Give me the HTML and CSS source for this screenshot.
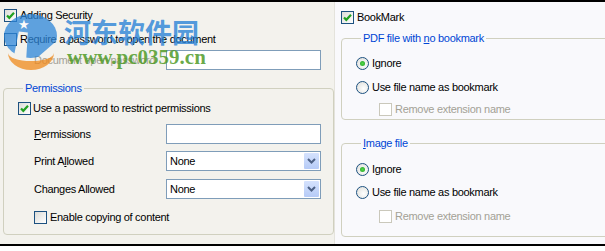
FILE: index.html
```html
<!DOCTYPE html>
<html lang="en">
<head>
  <meta charset="UTF-8" />
  <title>PDF Options</title>
  <link rel="stylesheet" href="styles.css">
</head>
<body>
  <div class="frame">
    <div class="pane left">
      <div class="row">
        <span class="check on"><svg viewBox="0 0 11 11"><path d="M2 5.5 L4.3 7.8 L9 2.8" /></svg></span>
        <span class="text">Adding Security</span>
      </div>
      <div class="row second">
        <span class="check"></span>
        <span class="text">Require a password to open the document</span>
      </div>
      <div class="row field">
        <span class="label muted">Document open password</span>
        <span class="input"></span>
      </div>

      <fieldset class="group perms">
        <legend>Permissions</legend>
        <div class="row inner">
          <span class="check on"><svg viewBox="0 0 11 11"><path d="M2 5.5 L4.3 7.8 L9 2.8" /></svg></span>
          <span class="text">Use a password to restrict permissions</span>
        </div>
        <div class="row field f1">
          <span class="label"><u>P</u>ermissions</span>
          <span class="input"></span>
        </div>
        <div class="row field f2">
          <span class="label">Print A<u>l</u>lowed</span>
          <span class="input combo">None<span class="drop"><svg viewBox="0 0 9 6"><path d="M1 1 L4.5 4.5 L8 1" /></svg></span></span>
        </div>
        <div class="row field f3">
          <span class="label">Chan<u>g</u>es Allowed</span>
          <span class="input combo">None<span class="drop"><svg viewBox="0 0 9 6"><path d="M1 1 L4.5 4.5 L8 1" /></svg></span></span>
        </div>
        <div class="row copy">
          <span class="check"></span>
          <span class="text">Enable copying of content</span>
        </div>
      </fieldset>
    </div>

    <div class="pane right">
      <div class="row bm">
        <span class="check on"><svg viewBox="0 0 11 11"><path d="M2 5.5 L4.3 7.8 L9 2.8" /></svg></span>
        <span class="text">BookMark</span>
      </div>

      <fieldset class="group side first">
        <legend>PDF file with <u>n</u>o bookmark</legend>
        <div class="row opt">
          <span class="radio on"></span>
          <span class="text">Ignore</span>
        </div>
        <div class="row opt">
          <span class="radio"></span>
          <span class="text">Use file name as bookmark</span>
        </div>
        <div class="row opt sub">
          <span class="check off"></span>
          <span class="text muted">Remove extension name</span>
        </div>
      </fieldset>

      <fieldset class="group side second-group">
        <legend><u>I</u>mage file</legend>
        <div class="row opt">
          <span class="radio on"></span>
          <span class="text">Ignore</span>
        </div>
        <div class="row opt">
          <span class="radio"></span>
          <span class="text">Use file name as bookmark</span>
        </div>
        <div class="row opt sub">
          <span class="check off"></span>
          <span class="text muted">Remove extension name</span>
        </div>
      </fieldset>
    </div>

    <div class="watermark">
      <div class="wm-logo">
        <div class="wm-disc"></div>
        <div class="wm-swoosh"></div>
        <div class="wm-star">★</div>
      </div>
      <span class="wm-name">河东软件园</span>
      <span class="wm-url">www.pc0359.cn</span>
    </div>
  </div>
</body>
</html>
```

FILE: styles.css
```css
* {
  margin: 0;
  padding: 0;
  box-sizing: border-box;
}

body {
  background: #ffffff;
  font-family: 'Liberation Sans', Arial, sans-serif;
  font-size: 11px;
  letter-spacing: -0.3px;
  color: #000000;
}

.frame {
  position: relative;
  display: flex;
  width: 605px;
  height: 246px;
  border-top: 2px solid #000;
  border-bottom: 2px solid #000;
  overflow: hidden;
}

.pane {
  display: flex;
  flex-direction: column;
}

.left {
  width: 336px;
  background: #f3f2ed;
  padding: 3px 0 0 4px;
}

.right {
  flex: 1;
  background: #f9f9fc;
  border-left: 1px solid #e4e3dc;
  padding: 5px 0 0 5px;
}

.row {
  display: flex;
  align-items: center;
  height: 20px;
  gap: 1px;
}

.row .text {
  white-space: nowrap;
}

.second {
  margin-top: 4px;
}

.field {
  margin-top: 1px;
  gap: 0;
}

.label {
  width: 132px;
  padding-left: 30px;
  white-space: nowrap;
  flex: none;
}

.left > .field .label {
  width: 162px;
}

.muted {
  color: #a3a196;
}

.input {
  display: flex;
  align-items: center;
  width: 155px;
  height: 20px;
  border: 1px solid #7f9db9;
  background: #fff;
  padding-left: 3px;
  position: relative;
}

.drop {
  position: absolute;
  right: 1px;
  top: 1px;
  width: 15px;
  height: 16px;
  background: linear-gradient(#d5e2fd, #b6cbf7);
  border-radius: 1px;
  display: flex;
  align-items: center;
  justify-content: center;
}

.drop svg {
  width: 9px;
  height: 6px;
  fill: none;
  stroke: #4d6185;
  stroke-width: 2;
}

/* check boxes and radios */
.check {
  width: 13px;
  height: 13px;
  flex: none;
  border: 1px solid #1c5180;
  background: linear-gradient(135deg, #dcdcd7, #ffffff);
  margin-right: 2px;
  display: flex;
  align-items: center;
  justify-content: center;
}

.check svg {
  width: 11px;
  height: 11px;
  fill: none;
  stroke: #21a121;
  stroke-width: 2.2;
}

.check.off {
  border-color: #cac8bb;
  background: #fff;
}

.radio {
  width: 13px;
  height: 13px;
  flex: none;
  border: 1px solid #1c5180;
  border-radius: 50%;
  background: radial-gradient(circle at 60% 60%, #ffffff, #dcdcd7);
  margin-right: 2px;
  position: relative;
}

.radio.on::after {
  content: "";
  position: absolute;
  left: 3px;
  top: 3px;
  width: 5px;
  height: 5px;
  border-radius: 50%;
  background: radial-gradient(circle, #55d74c, #21a121);
}

/* group boxes */
.group {
  border: 1px solid #d0d0bf;
  border-radius: 4px;
}

.group legend {
  margin-left: 5px;
  padding: 0 2px 0 2px;
  color: #0046d5;
  line-height: 13px;
}

.perms {
  width: 331px;
  height: 153px;
  margin: 12px 0 0 -1px;
  padding: 3px 0 0 14px;
}

.inner {
  gap: 0;
}

.perms .field .label {
  width: 148px;
  padding-left: 16px;
}

.f1 {
  margin-top: 6px;
}

.f2 {
  margin-top: 7px;
}

.f3 {
  margin-top: 8px;
}

.copy {
  margin-top: 8px;
  padding-left: 16px;
}

.bm {
  margin-left: 1px;
}

.side {
  width: 290px;
  margin-left: 1px;
  padding-left: 14px;
}

.first {
  margin-top: 5px;
  height: 88px;
  padding-top: 8px;
}

.first .opt {
  margin-bottom: 2px;
}

.first .opt:first-of-type {
  margin-bottom: 4px;
}

.second-group {
  margin-top: 17px;
  height: 100px;
  padding-top: 9px;
}

.second-group .opt {
  margin-bottom: 4px;
}

.second-group .opt:first-of-type {
  margin-bottom: 3px;
}

.sub {
  padding-left: 23px;
}

/* watermark over the dialog */
.watermark {
  position: absolute;
  left: 0;
  top: 0;
  width: 230px;
  height: 75px;
  z-index: 5;
  pointer-events: none;
}

.wm-logo {
  position: absolute;
  left: 4px;
  top: 12px;
  width: 56px;
  height: 56px;
  opacity: 0.75;
}

.wm-disc {
  position: absolute;
  left: 0;
  top: 0;
  width: 53px;
  height: 44px;
  border-radius: 50%;
  background: #2d86d9;
  clip-path: polygon(0 0, 100% 0, 100% 60%, 62% 100%, 42% 100%, 45% 42%, 28% 40%, 18% 100%, 0 100%);
}

.wm-swoosh {
  position: absolute;
  left: 4px;
  top: 22px;
  width: 46px;
  height: 34px;
  border-radius: 50%;
  border-bottom: 9px solid #f08a1c;
}

.wm-star {
  position: absolute;
  left: 14px;
  top: 4px;
  font-family: 'DejaVu Sans', sans-serif;
  font-size: 13px;
  line-height: 14px;
  color: #ffffff;
}

.wm-name {
  position: absolute;
  left: 64px;
  top: 14px;
  font-family: 'Noto Sans CJK SC', sans-serif;
  font-weight: 700;
  font-size: 27px;
  line-height: 32px;
  letter-spacing: 0;
  color: rgba(40, 130, 215, 0.8);
  white-space: nowrap;
}

.wm-url {
  position: absolute;
  left: 67px;
  top: 43px;
  font-family: 'Liberation Serif', serif;
  font-weight: 700;
  font-size: 21px;
  line-height: 24px;
  letter-spacing: 0;
  color: rgba(80, 155, 40, 0.85);
  white-space: nowrap;
}
```
